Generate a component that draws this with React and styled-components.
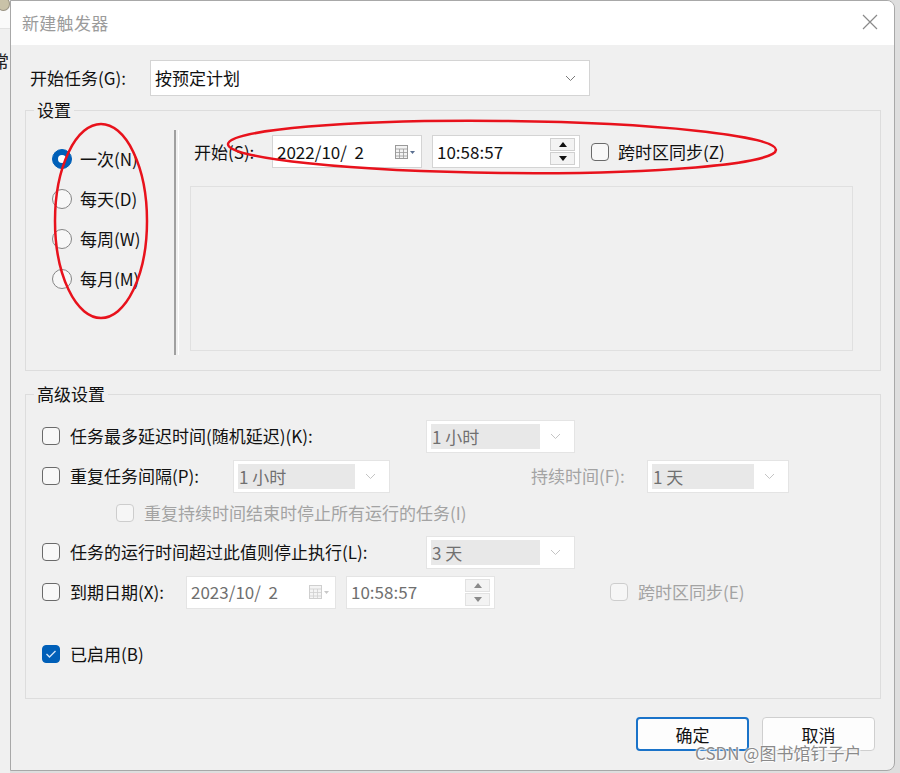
import React from 'react';
import styled, { createGlobalStyle } from 'styled-components';

const GlobalStyle = createGlobalStyle`
  html, body { margin: 0; padding: 0; }
  body {
    font-family: "Noto Sans CJK SC", "Noto Sans", sans-serif;
    background: #dedede;
  }
`;

const Screen = styled.div`
  position: relative;
  width: 900px;
  height: 773px;
  overflow: hidden;
  display: flex;
  align-items: flex-start;
  background: #dedede;
`;

const BackApp = styled.div`
  width: 10px;
  height: 773px;
  flex: none;
  overflow: hidden;
  background: #f0f0f0;
  display: flex;
  flex-direction: column;
`;

const BackTop = styled.div`
  height: 28px;
  flex: none;
  background: #fafafa;
  border-bottom: 1px solid #e2e2e2;
  display: flex;
  align-items: flex-start;
`;

const BackIcon = styled.div`
  width: 12px;
  height: 12px;
  margin: -3px 0 0 -3px;
  border-radius: 50%;
  background: #c9c2a8;
  border: 1px solid #9a9484;
`;

const BackGlyph = styled.div`
  margin: 22px 0 0 -8px;
  font-size: 17px;
  line-height: 20px;
  color: #222;
`;

const Dialog = styled.div`
  width: 885px;
  height: 771px;
  flex: none;
  box-sizing: border-box;
  border: 1px solid #a8a8a8;
  border-radius: 0 8px 8px 0;
  overflow: hidden;
  background: #f0f0f0;
  display: flex;
  flex-direction: column;
`;

const TitleBar = styled.div`
  height: 44px;
  flex: none;
  background: #fff;
  display: flex;
  align-items: center;
  justify-content: space-between;
  padding: 0 16px 2px 11px;
  box-sizing: border-box;
`;

const Title = styled.div`
  font-size: 17px;
  color: #9b9b9b;
  letter-spacing: 0.3px;
`;

const Body = styled.div`
  flex: 1;
  padding: 15px 13px 0 14px;
  display: flex;
  flex-direction: column;
  color: #111;
  font-size: 17px;
`;

const TopRow = styled.div`
  display: flex;
  align-items: center;
  height: 36px;
  padding-left: 5px;
`;

const Label = styled.div`
  width: ${(p) => (p.w ? `${p.w}px` : 'auto')};
  flex: none;
  font-size: 17px;
  line-height: 20px;
  white-space: pre;
  color: ${(p) => (p.disabled ? '#a3a3a3' : '#111')};
  margin-left: ${(p) => p.ml || 0}px;
`;

const Group = styled.fieldset`
  margin: ${(p) => p.mt}px 0 0 0;
  padding: ${(p) => p.pad};
  border: 1px solid #dddddd;
  min-width: 0;
`;

const Legend = styled.legend`
  font-size: 17px;
  line-height: 20px;
  padding: 0 3px;
  margin-left: 8px;
  color: #111;
`;

const Schedule = styled.div`
  display: flex;
  height: 225px;
`;

const RadioCol = styled.div`
  width: 148px;
  flex: none;
  padding: 9px 0 0 26px;
  box-sizing: border-box;
`;

const RadioRow = styled.div`
  height: 40px;
  display: flex;
  align-items: center;
  gap: 8px;
`;

const RadioDot = styled.div`
  width: 20px;
  height: 20px;
  box-sizing: border-box;
  border-radius: 50%;
  flex: none;
  display: flex;
  align-items: center;
  justify-content: center;
  background: ${(p) => (p.on ? '#005fb8' : '#f7f7f7')};
  border: 1px solid ${(p) => (p.on ? '#005fb8' : '#858585')};
  &::after {
    content: '';
    display: ${(p) => (p.on ? 'block' : 'none')};
    width: 8px;
    height: 8px;
    border-radius: 50%;
    background: #fff;
  }
`;

const Separator = styled.div`
  width: 2px;
  flex: none;
  border-left: 2px solid #a0a0a0;
  border-right: 1px solid #ffffff;
`;

const RightCol = styled.div`
  flex: 1;
  padding: 5px 27px 0 11px;
  display: flex;
  flex-direction: column;
`;

const StartRow = styled.div`
  display: flex;
  align-items: center;
  height: 33px;
  padding-left: 4px;
`;

const EmptyPanel = styled.div`
  margin-top: 18px;
  height: 165px;
  box-sizing: border-box;
  border: 1px solid #e0e0e0;
`;

const Field = styled.div`
  width: ${(p) => p.w}px;
  height: ${(p) => p.h || 33}px;
  margin-left: ${(p) => p.ml || 0}px;
  flex: none;
  box-sizing: border-box;
  background: #fff;
  border: 1px solid ${(p) => (p.disabled ? '#e4e4e4' : '#d4d4d4')};
  display: flex;
  align-items: center;
  padding: 0 4px 0 4px;
  font-size: 17px;
  color: ${(p) => (p.disabled ? '#6f6f6f' : '#111')};
  white-space: pre;
`;

const FieldText = styled.div`
  flex: 1;
  line-height: 20px;
`;

const DisabledFill = styled.div`
  flex: 1;
  align-self: stretch;
  margin: 3px 0;
  background: #e8e8e8;
  display: flex;
  align-items: center;
  padding-left: 1px;
  color: #707070;
`;

const Chevron = styled.div`
  width: 30px;
  flex: none;
  display: flex;
  justify-content: center;
`;

const Spinner = styled.div`
  width: 25px;
  flex: none;
  display: flex;
  flex-direction: column;
  gap: 1px;
`;

const SpinBtn = styled.div`
  height: 13px;
  box-sizing: border-box;
  border: 1px solid ${(p) => (p.disabled ? '#e2e2e2' : '#d0d0d0')};
  background: #f3f3f3;
  display: flex;
  align-items: center;
  justify-content: center;
`;

const Check = styled.div`
  width: 18px;
  height: 18px;
  flex: none;
  box-sizing: border-box;
  border-radius: 4px;
  margin-left: ${(p) => p.ml || 0}px;
  margin-right: ${(p) => p.mr ?? 10}px;
  background: ${(p) => (p.on ? '#005fb8' : p.disabled ? '#f6f6f6' : '#f8f8f8')};
  border: 1px solid ${(p) => (p.on ? '#005fb8' : p.disabled ? '#cdcdcd' : '#6a6a6a')};
  display: flex;
  align-items: center;
  justify-content: center;
`;

const Advanced = styled.div`
  display: flex;
  flex-direction: column;
`;

const OptRow = styled.div`
  height: ${(p) => p.h}px;
  margin-top: ${(p) => p.mt || 0}px;
  display: flex;
  align-items: center;
  padding-left: 16px;
`;

const Footer = styled.div`
  display: flex;
  justify-content: flex-end;
  gap: 13px;
  margin-top: 18px;
  padding-right: 6px;
`;

const Button = styled.div`
  width: 113px;
  height: 34px;
  box-sizing: border-box;
  border-radius: 4px;
  background: #fdfdfd;
  border: ${(p) => (p.primary ? '2px solid #1a73c9' : '1px solid #cfcfcf')};
  display: flex;
  align-items: center;
  justify-content: center;
  font-size: 17px;
  color: #111;
`;

const Watermark = styled.div`
  position: absolute;
  left: 695px;
  top: 743px;
  font-size: 17px;
  line-height: 20px;
  color: #8a8a8a;
  text-shadow: 0 0 2px #fff, 0 0 2px #fff, 1px 1px 1px #fff;
  white-space: nowrap;
`;

const Annotations = styled.svg`
  position: absolute;
  left: 0;
  top: 0;
  pointer-events: none;
`;

const CloseIcon = () => (
  <svg width="16" height="16" viewBox="0 0 16 16">
    <path d="M1 1 L15 15 M15 1 L1 15" stroke="#8a8a8a" strokeWidth="1.2" fill="none" />
  </svg>
);

const ChevronIcon = ({ light }) => (
  <svg width="11" height="7" viewBox="0 0 11 7">
    <path d="M1 1 L5.5 5.5 L10 1" stroke={light ? '#c4c4c4' : '#7a7a7a'} strokeWidth="1" fill="none" />
  </svg>
);

const CalendarIcon = ({ disabled }) => {
  const c = disabled ? '#cfcfcf' : '#9a9a9a';
  return (
    <svg width="22" height="16" viewBox="0 0 22 16">
      <rect x="0.5" y="1.5" width="12" height="13" fill="#f4f4f4" stroke={c} />
      <path d="M0.5 5 H12.5 M0.5 8.5 H12.5 M0.5 12 H12.5 M4.5 5 V14.5 M8.5 5 V14.5" stroke={c} strokeWidth="0.8" />
      <path d="M15 7 L20 7 L17.5 10 Z" fill={disabled ? '#c8c8c8' : '#5a6f90'} />
    </svg>
  );
};

const Tri = ({ up, disabled }) => (
  <svg width="8" height="5" viewBox="0 0 8 5">
    <path d={up ? 'M0 5 L4 0 L8 5 Z' : 'M0 0 L8 0 L4 5 Z'} fill={disabled ? '#8a8a8a' : '#111'} />
  </svg>
);

const Tick = () => (
  <svg width="12" height="10" viewBox="0 0 12 10">
    <path d="M1.5 5 L4.5 8 L10.5 2" stroke="#cfe3f7" strokeWidth="1.4" fill="none" />
  </svg>
);

const Select = ({ w, ml, value }) => (
  <Field w={w} ml={ml} h={36}>
    <FieldText>{value}</FieldText>
    <Chevron>
      <ChevronIcon />
    </Chevron>
  </Field>
);

const DisabledSelect = ({ w, ml, value }) => (
  <Field w={w} ml={ml} disabled>
    <DisabledFill>{value}</DisabledFill>
    <Chevron>
      <ChevronIcon light />
    </Chevron>
  </Field>
);

const DateBox = ({ w, ml, value, disabled }) => (
  <Field w={w} ml={ml} disabled={disabled}>
    <FieldText>{value}</FieldText>
    <CalendarIcon disabled={disabled} />
  </Field>
);

const TimeBox = ({ w, ml, value, disabled }) => (
  <Field w={w} ml={ml} disabled={disabled}>
    <FieldText>{value}</FieldText>
    <Spinner>
      <SpinBtn disabled={disabled}>
        <Tri up disabled={disabled} />
      </SpinBtn>
      <SpinBtn disabled={disabled}>
        <Tri disabled={disabled} />
      </SpinBtn>
    </Spinner>
  </Field>
);

const radios = [
  { label: '一次(N)', on: true },
  { label: '每天(D)' },
  { label: '每周(W)' },
  { label: '每月(M)' },
];

export default function App() {
  return (
    <Screen>
      <GlobalStyle />
      <BackApp>
        <BackTop>
          <BackIcon />
        </BackTop>
        <BackGlyph>常</BackGlyph>
      </BackApp>

      <Dialog>
        <TitleBar>
          <Title>新建触发器</Title>
          <CloseIcon />
        </TitleBar>

        <Body>
          <TopRow>
            <Label w={120}>开始任务(G):</Label>
            <Select w={440} value="按预定计划" />
          </TopRow>

          <Group mt={4} pad="10px 0 15px 0">
            <Legend>设置</Legend>
            <Schedule>
              <RadioCol>
                {radios.map((r) => (
                  <RadioRow key={r.label}>
                    <RadioDot on={r.on} />
                    <Label>{r.label}</Label>
                  </RadioRow>
                ))}
              </RadioCol>
              <Separator />
              <RightCol>
                <StartRow>
                  <Label w={78}>开始(S):</Label>
                  <DateBox w={150} value="2022/10/  2" />
                  <TimeBox w={148} ml={10} value="10:58:57" />
                  <Check ml={11} mr={9} />
                  <Label>跨时区同步(Z)</Label>
                </StartRow>
                <EmptyPanel />
              </RightCol>
            </Schedule>
          </Group>

          <Group mt={13} pad="12px 0 24px 0">
            <Legend>高级设置</Legend>
            <Advanced>
              <OptRow h={40}>
                <Check />
                <Label w={356}>任务最多延迟时间(随机延迟)(K):</Label>
                <DisabledSelect w={149} value="1 小时" />
              </OptRow>
              <OptRow h={40}>
                <Check />
                <Label w={163}>重复任务间隔(P):</Label>
                <DisabledSelect w={157} value="1 小时" />
                <Label w={116} ml={141} disabled>持续时间(F):</Label>
                <DisabledSelect w={142} value="1 天" />
              </OptRow>
              <OptRow h={34}>
                <Check ml={74} disabled />
                <Label disabled>重复持续时间结束时停止所有运行的任务(I)</Label>
              </OptRow>
              <OptRow h={44}>
                <Check />
                <Label w={356}>任务的运行时间超过此值则停止执行(L):</Label>
                <DisabledSelect w={149} value="3 天" />
              </OptRow>
              <OptRow h={36}>
                <Check />
                <Label w={116}>到期日期(X):</Label>
                <DateBox w={150} value="2023/10/  2" disabled />
                <TimeBox w={149} ml={10} value="10:58:57" disabled />
                <Check ml={115} disabled />
                <Label disabled>跨时区同步(E)</Label>
              </OptRow>
              <OptRow h={40} mt={24}>
                <Check on>
                  <Tick />
                </Check>
                <Label>已启用(B)</Label>
              </OptRow>
            </Advanced>
          </Group>

          <Footer>
            <Button primary>确定</Button>
            <Button>取消</Button>
          </Footer>
        </Body>
      </Dialog>

      <Annotations width="900" height="773" viewBox="0 0 900 773">
        <ellipse cx="101" cy="221" rx="46" ry="97" fill="none" stroke="#e8121c" strokeWidth="2.5" />
        <ellipse cx="502" cy="147" rx="274" ry="26" fill="none" stroke="#e8121c" strokeWidth="2.5" transform="rotate(0.6 502 147)" />
      </Annotations>

      <Watermark>CSDN @图书馆钉子户</Watermark>
    </Screen>
  );
}
